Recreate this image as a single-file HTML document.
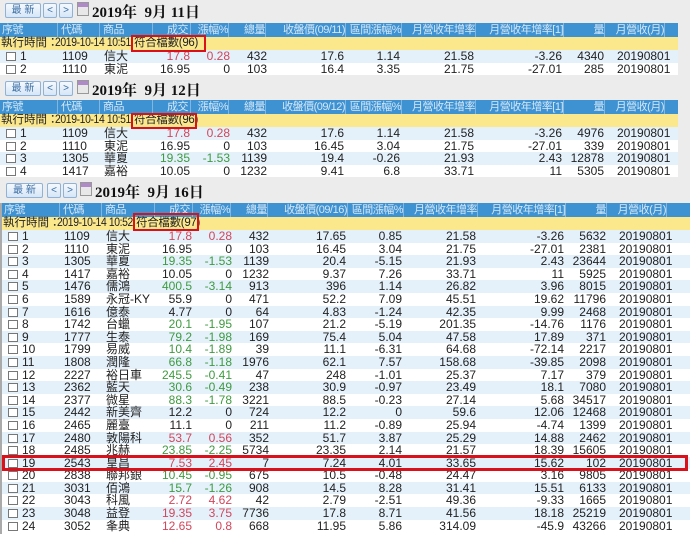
<!DOCTYPE html>
<html><head><meta charset="utf-8">
<style>
*{margin:0;padding:0;box-sizing:border-box}
body{width:690px;height:534px;overflow:hidden;background:#ececec;font-family:"Liberation Sans","Noto Sans CJK TC",sans-serif;font-size:12px;color:#222;position:relative}
.sec{position:absolute;left:0;background:#fff}
.tb{position:absolute;left:0;height:20px;width:690px}
.btn{position:absolute;top:3px;height:15px;border:1px solid #8fb2d6;background:linear-gradient(#f4f9ff,#d6e6f6);border-radius:2px;color:#3a6ea5;font-size:10px;text-align:center;line-height:13px}
.cal{position:absolute;top:2px;left:77px;width:12px;height:14px;background:linear-gradient(#b08ac8 0 4px,#e8e8e8 4px);border:1px solid #999}
.dt{position:absolute;left:92px;top:1px;font-family:"Liberation Serif","Noto Serif CJK SC",serif;font-weight:bold;font-size:15px;color:#111;white-space:pre}
.hd{position:relative;height:14px;background:#3f92d2;color:#d4e8f8;font-size:11px;line-height:14px;letter-spacing:-0.5px}
.hd span{position:absolute;top:0;border-right:1px solid #7fb6e2;height:14px;white-space:nowrap;overflow:hidden}
.yl{position:relative;height:13px;background:#fbe78c;line-height:13px;font-size:11.5px;white-space:nowrap}
.yl .t{position:absolute;left:1px;top:0}
.yl .d{position:absolute;left:55px;top:0;letter-spacing:-0.4px;transform:scaleX(.9);transform-origin:left}
.yl b{position:absolute;left:134px;top:0;font-weight:normal;letter-spacing:-0.3px}
.r{position:relative;height:12.6px;line-height:12.6px;white-space:nowrap}
.r:nth-child(odd){background:#e4f1fb}
.r span{position:absolute;top:0}
.r i{position:absolute;left:6px;top:2px;width:10px;height:9px;border:1px solid #777;background:#fff}
.n{left:20px}.c{left:62px}.m{left:104px}
.a{left:140px;width:50px;text-align:right}
.b{left:190px;width:40px;text-align:right}
.v{left:230px;width:37px;text-align:right}
.p{left:280px;width:64px;text-align:right}
.q{left:345px;width:55px;text-align:right}
.y{left:405px;width:69px;text-align:right}
.z{left:480px;width:82px;text-align:right}
.w{left:562px;width:42px;text-align:right}
.mo{left:617px}
.R{color:#d2465a}.G{color:#3f9a40}
.box{position:absolute;border:2px solid #d8111b}
</style></head><body>

<div class="tb" style="top:0"><div class="btn" style="left:5px;width:36px">最 新</div><div class="btn" style="left:43px;width:14px">&lt;</div><div class="btn" style="left:59px;width:14px">&gt;</div><div class="cal"></div><div class="dt">2019年  9月 11日</div></div>
<div class="sec" style="top:23px;width:678px;height:52px">
<div class="hd"><span style="left:0;width:58px;padding-left:2px">序號</span><span style="left:58px;width:42px;padding-left:3px">代碼</span><span style="left:100px;width:53px;padding-left:3px">商品</span><span style="left:153px;width:38px;text-align:right;padding-right:2px">成交</span><span style="left:191px;width:38px;text-align:right">漲幅%</span><span style="left:229px;width:37px;text-align:right">總量</span><span style="left:266px;width:80px;text-align:right">收盤價(09/11)</span><span style="left:346px;width:56px;text-align:right">區間漲幅%</span><span style="left:402px;width:74px;text-align:right">月營收年增率</span><span style="left:476px;width:88px;text-align:right">月營收年增率[1]</span><span style="left:564px;width:41px;text-align:right">量</span><span style="left:605px;width:60px;text-align:right">月營收(月)</span></div>
<div class="yl"><span class="t">執行時間：</span><span class="d">2019-10-14 10:51</span><b>符合檔數(96)</b></div>
<div>
<div class="r"><i></i><span class="n">1</span><span class="c">1109</span><span class="m">信大</span><span class="a R">17.8</span><span class="b R">0.28</span><span class="v">432</span><span class="p">17.6</span><span class="q">1.14</span><span class="y">21.58</span><span class="z">-3.26</span><span class="w">4340</span><span class="mo">20190801</span></div>
<div class="r" style="height:12px;overflow:hidden"><i></i><span class="n">2</span><span class="c">1110</span><span class="m">東泥</span><span class="a">16.95</span><span class="b">0</span><span class="v">103</span><span class="p">16.4</span><span class="q">3.35</span><span class="y">21.75</span><span class="z">-27.01</span><span class="w">285</span><span class="mo">20190801</span></div>
</div></div>
<div class="box" style="left:131px;top:35px;width:75px;height:17px"></div>

<div class="tb" style="top:78px"><div class="btn" style="left:5px;width:36px">最 新</div><div class="btn" style="left:43px;width:14px">&lt;</div><div class="btn" style="left:59px;width:14px">&gt;</div><div class="cal"></div><div class="dt">2019年  9月 12日</div></div>
<div class="sec" style="top:100px;width:678px;height:77px">
<div class="hd"><span style="left:0;width:58px;padding-left:2px">序號</span><span style="left:58px;width:42px;padding-left:3px">代碼</span><span style="left:100px;width:53px;padding-left:3px">商品</span><span style="left:153px;width:38px;text-align:right;padding-right:2px">成交</span><span style="left:191px;width:38px;text-align:right">漲幅%</span><span style="left:229px;width:37px;text-align:right">總量</span><span style="left:266px;width:80px;text-align:right">收盤價(09/12)</span><span style="left:346px;width:56px;text-align:right">區間漲幅%</span><span style="left:402px;width:74px;text-align:right">月營收年增率</span><span style="left:476px;width:88px;text-align:right">月營收年增率[1]</span><span style="left:564px;width:41px;text-align:right">量</span><span style="left:605px;width:60px;text-align:right">月營收(月)</span></div>
<div class="yl"><span class="t">執行時間：</span><span class="d">2019-10-14 10:51</span><b>符合檔數(96)</b></div>
<div>
<div class="r"><i></i><span class="n">1</span><span class="c">1109</span><span class="m">信大</span><span class="a R">17.8</span><span class="b R">0.28</span><span class="v">432</span><span class="p">17.6</span><span class="q">1.14</span><span class="y">21.58</span><span class="z">-3.26</span><span class="w">4976</span><span class="mo">20190801</span></div>
<div class="r"><i></i><span class="n">2</span><span class="c">1110</span><span class="m">東泥</span><span class="a">16.95</span><span class="b">0</span><span class="v">103</span><span class="p">16.45</span><span class="q">3.04</span><span class="y">21.75</span><span class="z">-27.01</span><span class="w">339</span><span class="mo">20190801</span></div>
<div class="r"><i></i><span class="n">3</span><span class="c">1305</span><span class="m">華夏</span><span class="a G">19.35</span><span class="b G">-1.53</span><span class="v">1139</span><span class="p">19.4</span><span class="q">-0.26</span><span class="y">21.93</span><span class="z">2.43</span><span class="w">12878</span><span class="mo">20190801</span></div>
<div class="r"><i></i><span class="n">4</span><span class="c">1417</span><span class="m">嘉裕</span><span class="a">10.05</span><span class="b">0</span><span class="v">1232</span><span class="p">9.41</span><span class="q">6.8</span><span class="y">33.71</span><span class="z">11</span><span class="w">5305</span><span class="mo">20190801</span></div>
</div></div>
<div class="box" style="left:131px;top:113px;width:66px;height:16px"></div>

<div class="tb" style="top:180px"><div class="btn" style="left:6px;width:37px">最 新</div><div class="btn" style="left:47px;width:14px">&lt;</div><div class="btn" style="left:63px;width:14px">&gt;</div><div class="cal" style="left:80px"></div><div class="dt" style="left:95px">2019年  9月 16日</div></div>
<div class="sec" style="top:203px;width:690px;height:331px;border-left:2px solid #aaa">
<div class="hd"><span style="left:0;width:58px;padding-left:2px">序號</span><span style="left:58px;width:42px;padding-left:3px">代碼</span><span style="left:100px;width:53px;padding-left:3px">商品</span><span style="left:153px;width:38px;text-align:right;padding-right:2px">成交</span><span style="left:191px;width:38px;text-align:right">漲幅%</span><span style="left:229px;width:37px;text-align:right">總量</span><span style="left:266px;width:80px;text-align:right">收盤價(09/16)</span><span style="left:346px;width:56px;text-align:right">區間漲幅%</span><span style="left:402px;width:74px;text-align:right">月營收年增率</span><span style="left:476px;width:88px;text-align:right">月營收年增率[1]</span><span style="left:564px;width:41px;text-align:right">量</span><span style="left:605px;width:60px;text-align:right">月營收(月)</span></div>
<div class="yl"><span class="t">執行時間：</span><span class="d">2019-10-14 10:52</span><b>符合檔數(97)</b></div>
<div>
<div class="r"><i></i><span class="n">1</span><span class="c">1109</span><span class="m">信大</span><span class="a R">17.8</span><span class="b R">0.28</span><span class="v">432</span><span class="p">17.65</span><span class="q">0.85</span><span class="y">21.58</span><span class="z">-3.26</span><span class="w">5632</span><span class="mo">20190801</span></div>
<div class="r"><i></i><span class="n">2</span><span class="c">1110</span><span class="m">東泥</span><span class="a">16.95</span><span class="b">0</span><span class="v">103</span><span class="p">16.45</span><span class="q">3.04</span><span class="y">21.75</span><span class="z">-27.01</span><span class="w">2381</span><span class="mo">20190801</span></div>
<div class="r"><i></i><span class="n">3</span><span class="c">1305</span><span class="m">華夏</span><span class="a G">19.35</span><span class="b G">-1.53</span><span class="v">1139</span><span class="p">20.4</span><span class="q">-5.15</span><span class="y">21.93</span><span class="z">2.43</span><span class="w">23644</span><span class="mo">20190801</span></div>
<div class="r"><i></i><span class="n">4</span><span class="c">1417</span><span class="m">嘉裕</span><span class="a">10.05</span><span class="b">0</span><span class="v">1232</span><span class="p">9.37</span><span class="q">7.26</span><span class="y">33.71</span><span class="z">11</span><span class="w">5925</span><span class="mo">20190801</span></div>
<div class="r"><i></i><span class="n">5</span><span class="c">1476</span><span class="m">儒鴻</span><span class="a G">400.5</span><span class="b G">-3.14</span><span class="v">913</span><span class="p">396</span><span class="q">1.14</span><span class="y">26.82</span><span class="z">3.96</span><span class="w">8015</span><span class="mo">20190801</span></div>
<div class="r"><i></i><span class="n">6</span><span class="c">1589</span><span class="m">永冠-KY</span><span class="a">55.9</span><span class="b">0</span><span class="v">471</span><span class="p">52.2</span><span class="q">7.09</span><span class="y">45.51</span><span class="z">19.62</span><span class="w">11796</span><span class="mo">20190801</span></div>
<div class="r"><i></i><span class="n">7</span><span class="c">1616</span><span class="m">億泰</span><span class="a">4.77</span><span class="b">0</span><span class="v">64</span><span class="p">4.83</span><span class="q">-1.24</span><span class="y">42.35</span><span class="z">9.99</span><span class="w">2468</span><span class="mo">20190801</span></div>
<div class="r"><i></i><span class="n">8</span><span class="c">1742</span><span class="m">台蠟</span><span class="a G">20.1</span><span class="b G">-1.95</span><span class="v">107</span><span class="p">21.2</span><span class="q">-5.19</span><span class="y">201.35</span><span class="z">-14.76</span><span class="w">1176</span><span class="mo">20190801</span></div>
<div class="r"><i></i><span class="n">9</span><span class="c">1777</span><span class="m">生泰</span><span class="a G">79.2</span><span class="b G">-1.98</span><span class="v">169</span><span class="p">75.4</span><span class="q">5.04</span><span class="y">47.58</span><span class="z">17.89</span><span class="w">371</span><span class="mo">20190801</span></div>
<div class="r"><i></i><span class="n">10</span><span class="c">1799</span><span class="m">易威</span><span class="a G">10.4</span><span class="b G">-1.89</span><span class="v">39</span><span class="p">11.1</span><span class="q">-6.31</span><span class="y">64.68</span><span class="z">-72.14</span><span class="w">2217</span><span class="mo">20190801</span></div>
<div class="r"><i></i><span class="n">11</span><span class="c">1808</span><span class="m">潤隆</span><span class="a G">66.8</span><span class="b G">-1.18</span><span class="v">1976</span><span class="p">62.1</span><span class="q">7.57</span><span class="y">158.68</span><span class="z">-39.85</span><span class="w">2098</span><span class="mo">20190801</span></div>
<div class="r"><i></i><span class="n">12</span><span class="c">2227</span><span class="m">裕日車</span><span class="a G">245.5</span><span class="b G">-0.41</span><span class="v">47</span><span class="p">248</span><span class="q">-1.01</span><span class="y">25.37</span><span class="z">7.17</span><span class="w">379</span><span class="mo">20190801</span></div>
<div class="r"><i></i><span class="n">13</span><span class="c">2362</span><span class="m">藍天</span><span class="a G">30.6</span><span class="b G">-0.49</span><span class="v">238</span><span class="p">30.9</span><span class="q">-0.97</span><span class="y">23.49</span><span class="z">18.1</span><span class="w">7080</span><span class="mo">20190801</span></div>
<div class="r"><i></i><span class="n">14</span><span class="c">2377</span><span class="m">微星</span><span class="a G">88.3</span><span class="b G">-1.78</span><span class="v">3221</span><span class="p">88.5</span><span class="q">-0.23</span><span class="y">27.14</span><span class="z">5.68</span><span class="w">34517</span><span class="mo">20190801</span></div>
<div class="r"><i></i><span class="n">15</span><span class="c">2442</span><span class="m">新美齊</span><span class="a">12.2</span><span class="b">0</span><span class="v">724</span><span class="p">12.2</span><span class="q">0</span><span class="y">59.6</span><span class="z">12.06</span><span class="w">12468</span><span class="mo">20190801</span></div>
<div class="r"><i></i><span class="n">16</span><span class="c">2465</span><span class="m">麗臺</span><span class="a">11.1</span><span class="b">0</span><span class="v">211</span><span class="p">11.2</span><span class="q">-0.89</span><span class="y">25.94</span><span class="z">-4.74</span><span class="w">1399</span><span class="mo">20190801</span></div>
<div class="r"><i></i><span class="n">17</span><span class="c">2480</span><span class="m">敦陽科</span><span class="a R">53.7</span><span class="b R">0.56</span><span class="v">352</span><span class="p">51.7</span><span class="q">3.87</span><span class="y">25.29</span><span class="z">14.88</span><span class="w">2462</span><span class="mo">20190801</span></div>
<div class="r"><i></i><span class="n">18</span><span class="c">2485</span><span class="m">兆赫</span><span class="a G">23.85</span><span class="b G">-2.25</span><span class="v">5734</span><span class="p">23.35</span><span class="q">2.14</span><span class="y">21.57</span><span class="z">18.39</span><span class="w">15605</span><span class="mo">20190801</span></div>
<div class="r"><i></i><span class="n">19</span><span class="c">2543</span><span class="m">皇昌</span><span class="a R">7.53</span><span class="b R">2.45</span><span class="v">7</span><span class="p">7.24</span><span class="q">4.01</span><span class="y">33.65</span><span class="z">15.62</span><span class="w">102</span><span class="mo">20190801</span></div>
<div class="r"><i></i><span class="n">20</span><span class="c">2838</span><span class="m">聯邦銀</span><span class="a G">10.45</span><span class="b G">-0.95</span><span class="v">675</span><span class="p">10.5</span><span class="q">-0.48</span><span class="y">24.47</span><span class="z">3.16</span><span class="w">9805</span><span class="mo">20190801</span></div>
<div class="r"><i></i><span class="n">21</span><span class="c">3031</span><span class="m">佰鴻</span><span class="a G">15.7</span><span class="b G">-1.26</span><span class="v">908</span><span class="p">14.5</span><span class="q">8.28</span><span class="y">31.41</span><span class="z">15.51</span><span class="w">6133</span><span class="mo">20190801</span></div>
<div class="r"><i></i><span class="n">22</span><span class="c">3043</span><span class="m">科風</span><span class="a R">2.72</span><span class="b R">4.62</span><span class="v">42</span><span class="p">2.79</span><span class="q">-2.51</span><span class="y">49.36</span><span class="z">-9.33</span><span class="w">1665</span><span class="mo">20190801</span></div>
<div class="r"><i></i><span class="n">23</span><span class="c">3048</span><span class="m">益登</span><span class="a R">19.35</span><span class="b R">3.75</span><span class="v">7736</span><span class="p">17.8</span><span class="q">8.71</span><span class="y">41.56</span><span class="z">18.18</span><span class="w">25219</span><span class="mo">20190801</span></div>
<div class="r"><i></i><span class="n">24</span><span class="c">3052</span><span class="m">夆典</span><span class="a R">12.65</span><span class="b R">0.8</span><span class="v">668</span><span class="p">11.95</span><span class="q">5.86</span><span class="y">314.09</span><span class="z">-45.9</span><span class="w">43266</span><span class="mo">20190801</span></div>
</div></div>
<div class="box" style="left:133px;top:213px;width:66px;height:18px"></div>
<div class="box" style="left:2px;top:455px;width:686px;height:16px;border-width:3px"></div>
</body></html>
